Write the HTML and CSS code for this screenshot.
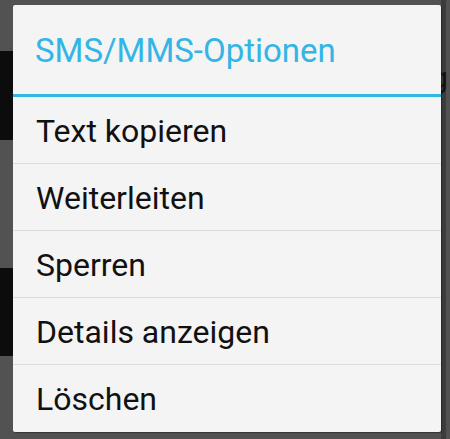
FILE: index.html
```html
<!DOCTYPE html>
<html lang="de">
<head>
<meta charset="utf-8">
<title>SMS/MMS-Optionen</title>
<link rel="stylesheet" href="styles.css">
</head>
<body>
<div class="behind">g</div>
<div class="dialog">
  <div class="title">SMS/MMS-Optionen</div>
  <ul class="menu">
    <li class="item">Text kopieren</li>
    <li class="item">Weiterleiten</li>
    <li class="item">Sperren</li>
    <li class="item">Details anzeigen</li>
    <li class="item">Löschen</li>
  </ul>
</div>
</body>
</html>
```
FILE: styles.css
```css
html, body {
  margin: 0;
  height: 100%;
}
body {
  position: relative;
  background-color: #525252;
  background-image:
    linear-gradient(#0c0c0c, #0c0c0c),
    linear-gradient(#0c0c0c, #0c0c0c),
    linear-gradient(#3c3c3c, #3c3c3c);
  background-size: 13px 89px, 13px 88px, 5px 439px;
  background-position: 0 51px, 0 268px, 441px 0;
  background-repeat: no-repeat;
  padding: 5px 9px 7px 13px;
  box-sizing: border-box;
  font-family: Roboto, "Noto Sans", sans-serif;
  overflow: hidden;
}
.behind {
  position: absolute;
  top: 63px;
  left: 431px;
  font-size: 30px;
  color: #111;
  line-height: 1;
}
.dialog {
  position: relative;
  width: 428px;
  height: 427px;
  background: #f4f4f4;
  border-radius: 2px;
  box-shadow: 1px 1px 1px rgba(0,0,0,0.35);
  display: flex;
  flex-direction: column;
}
.title {
  box-sizing: border-box;
  border-bottom: 3px solid #33b5e5;
  height: 92px;
  padding-left: 22px;
  padding-top: 2px;
  display: flex;
  align-items: center;
  color: #33b5e5;
  font-size: 33px;
}
.menu {
  list-style: none;
  margin: 0;
  padding: 0;
}
.item {
  height: 67px;
  box-sizing: border-box;
  display: flex;
  align-items: center;
  padding-left: 23px;
  padding-top: 1px;
  font-size: 32px;
  color: #111;
  border-top: 1px solid #dcdcdc;
}
.item:first-child {
  border-top: none;
  height: 66px;
}
```
